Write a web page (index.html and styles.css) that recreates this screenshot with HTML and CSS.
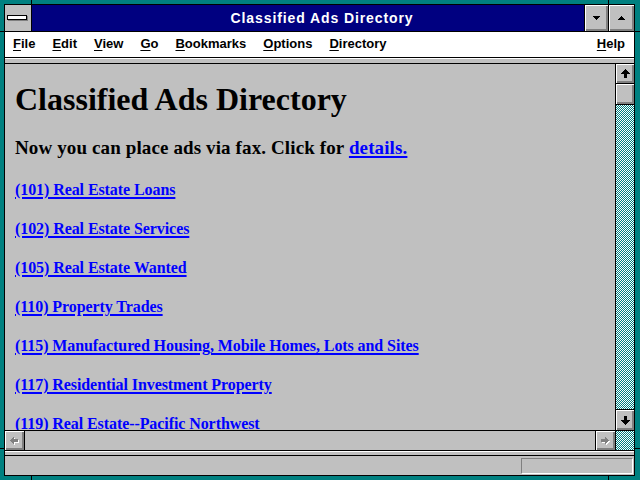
FILE: index.html
```html
<!DOCTYPE html>
<html lang="en">
  <head>
    <meta charset="UTF-8" />
    <title>Classified Ads Directory</title>
    <link rel="stylesheet" href="styles.css">
  </head>
  <body>
    <div class="window">
      <div class="titlebar">
        <div class="sysmenu"><div class="sysbar"></div></div>
        <div class="caption">Classified Ads Directory</div>
        <div class="tbtn min">
          <svg width="7" height="4" shape-rendering="crispEdges"><rect x="0" y="0" width="7" height="1"/><rect x="1" y="1" width="5" height="1"/><rect x="2" y="2" width="3" height="1"/><rect x="3" y="3" width="1" height="1"/></svg>
        </div>
        <div class="tbtn max">
          <svg width="7" height="4" shape-rendering="crispEdges"><rect x="3" y="0" width="1" height="1"/><rect x="2" y="1" width="3" height="1"/><rect x="1" y="2" width="5" height="1"/><rect x="0" y="3" width="7" height="1"/></svg>
        </div>
      </div>

      <div class="menubar">
        <span><u>F</u>ile</span>
        <span><u>E</u>dit</span>
        <span><u>V</u>iew</span>
        <span><u>G</u>o</span>
        <span><u>B</u>ookmarks</span>
        <span><u>O</u>ptions</span>
        <span><u>D</u>irectory</span>
        <span class="help"><u>H</u>elp</span>
      </div>
      <div class="divider"></div>

      <div class="main">
        <div class="page">
          <h1>Classified Ads Directory</h1>
          <h2>Now you can place ads via fax. Click for <a href="#">details.</a></h2>
          <p><a href="#">(101) Real Estate Loans</a></p>
          <p><a href="#">(102) Real Estate Services</a></p>
          <p><a href="#">(105) Real Estate Wanted</a></p>
          <p><a href="#">(110) Property Trades</a></p>
          <p><a href="#">(115) Manufactured Housing, Mobile Homes, Lots and Sites</a></p>
          <p><a href="#">(117) Residential Investment Property</a></p>
          <p><a href="#">(119) Real Estate--Pacific Northwest</a></p>
        </div>
        <div class="vscroll">
          <div class="sbtn">
            <svg width="9" height="9" shape-rendering="crispEdges"><rect x="4" y="0" width="1" height="1"/><rect x="3" y="1" width="3" height="1"/><rect x="2" y="2" width="5" height="1"/><rect x="1" y="3" width="7" height="1"/><rect x="0" y="4" width="9" height="1"/><rect x="3" y="5" width="3" height="4"/></svg>
          </div>
          <div class="thumb"></div>
          <div class="trough">
            <svg width="100%" height="100%" shape-rendering="crispEdges">
              <defs>
                <pattern id="dith" width="2" height="2" patternUnits="userSpaceOnUse">
                  <rect width="2" height="2" fill="#ffffff"/>
                  <rect x="0" y="0" width="1" height="1" fill="#008080"/>
                  <rect x="1" y="1" width="1" height="1" fill="#008080"/>
                </pattern>
              </defs>
              <rect width="100%" height="100%" fill="url(#dith)"/>
            </svg>
          </div>
          <div class="sbtn down">
            <svg width="9" height="9" shape-rendering="crispEdges"><rect x="3" y="0" width="3" height="4"/><rect x="0" y="4" width="9" height="1"/><rect x="1" y="5" width="7" height="1"/><rect x="2" y="6" width="5" height="1"/><rect x="3" y="7" width="3" height="1"/><rect x="4" y="8" width="1" height="1"/></svg>
          </div>
        </div>
      </div>

      <div class="hscroll">
        <div class="hbtn left">
          <svg width="9" height="8" shape-rendering="crispEdges">
            <g fill="#fff"><rect x="1" y="4" width="1" height="1"/><rect x="2" y="3" width="1" height="3"/><rect x="3" y="2" width="1" height="5"/><rect x="4" y="1" width="1" height="7"/><rect x="5" y="3" width="4" height="3"/></g>
            <g fill="#808080"><rect x="0" y="3" width="1" height="1"/><rect x="1" y="2" width="1" height="3"/><rect x="2" y="1" width="1" height="5"/><rect x="3" y="0" width="1" height="7"/><rect x="4" y="2" width="4" height="3"/></g>
          </svg>
        </div>
        <div class="htrough"></div>
        <div class="hbtn right">
          <svg width="9" height="8" shape-rendering="crispEdges">
            <g fill="#fff"><rect x="1" y="3" width="4" height="3"/><rect x="5" y="1" width="1" height="7"/><rect x="6" y="2" width="1" height="5"/><rect x="7" y="3" width="1" height="3"/><rect x="8" y="4" width="1" height="1"/></g>
            <g fill="#808080"><rect x="0" y="2" width="4" height="3"/><rect x="4" y="0" width="1" height="7"/><rect x="5" y="1" width="1" height="5"/><rect x="6" y="2" width="1" height="3"/><rect x="7" y="3" width="1" height="1"/></g>
          </svg>
        </div>
        <div class="corner">
          <svg width="100%" height="100%" shape-rendering="crispEdges"><rect width="100%" height="100%" fill="url(#dith)"/></svg>
        </div>
      </div>
      <div class="sep"></div>

      <div class="status">
        <div class="status-box"></div>
      </div>
    </div>
  </body>
</html>
```

FILE: styles.css
```css
* {
  margin: 0;
  padding: 0;
  box-sizing: border-box;
}

:root {
  --gray: #c0c0c0;
  --shadow: #808080;
  --navy: #000080;
  --teal: #008080;
}

body {
  width: 640px;
  height: 480px;
  padding: 4px 5px 4px 4px;
  font-family: "Liberation Sans", Arial, sans-serif;
  overflow: hidden;
  /* frame corner notches */
  background:
    linear-gradient(#000, #000) 31px 0 / 1px 4px no-repeat,
    linear-gradient(#000, #000) 608px 0 / 1px 4px no-repeat,
    linear-gradient(#000, #000) 31px 476px / 1px 4px no-repeat,
    linear-gradient(#000, #000) 608px 476px / 1px 4px no-repeat,
    linear-gradient(#000, #000) 0 31px / 4px 1px no-repeat,
    linear-gradient(#000, #000) 635px 31px / 5px 1px no-repeat,
    linear-gradient(#000, #000) 0 448px / 4px 1px no-repeat,
    linear-gradient(#000, #000) 635px 448px / 5px 1px no-repeat,
    var(--teal);
}

.window {
  width: 631px;
  height: 472px;
  border: 1px solid #000;
  background: var(--gray);
  display: flex;
  flex-direction: column;
}

/* title bar */
.titlebar {
  display: flex;
  height: 27px;
  border-bottom: 1px solid #000;
}

.sysmenu {
  width: 27px;
  border-right: 1px solid #000;
  background: var(--gray);
  padding: 10px 0 0 2px;
}

.sysbar {
  width: 20px;
  height: 5px;
  border: 1px solid #000;
  background: #fff;
  box-shadow: 1px 1px 0 var(--shadow);
}

.caption {
  flex: 1;
  background: var(--navy);
  color: #fff;
  font-weight: bold;
  font-size: 14px;
  letter-spacing: 0.9px;
  line-height: 26px;
  text-align: center;
  padding-left: 28px;
}

.tbtn {
  width: 24px;
  border-left: 1px solid #000;
  display: flex;
  align-items: center;
  justify-content: center;
  box-shadow: inset 1px 1px 0 #fff, inset -1px -1px 0 var(--shadow), inset -2px -2px 0 var(--shadow);
}

.tbtn.max {
  width: 26px;
}

.tbtn svg {
  margin-bottom: 1px;
}

/* menu */
.menubar {
  display: flex;
  gap: 17px;
  height: 26px;
  padding: 0 9px 0 8px;
  background: #fff;
  border-bottom: 1px solid #000;
  font-size: 13px;
  font-weight: bold;
  line-height: 24px;
}

.menubar u {
  text-decoration-thickness: 1px;
  text-underline-offset: 2px;
}

.menubar .help {
  margin-left: auto;
}

.divider {
  height: 6px;
  border-top: 1px solid #fff;
  border-bottom: 1px solid #000;
}

/* document area */
.main {
  display: flex;
  height: 366px;
}

.page {
  flex: 1;
  overflow: hidden;
  padding: 0 10px;
  font-family: "Liberation Serif", "Times New Roman", serif;
  font-weight: bold;
}

.page h1 {
  margin-top: 17px;
  font-size: 32px;
  line-height: 36px;
}

.page h2 {
  margin: 20px 0 21px;
  font-size: 19px;
  line-height: 22px;
  letter-spacing: 0.12px;
}

.page p {
  font-size: 16px;
  line-height: 20px;
  margin-bottom: 19px;
  white-space: nowrap;
  letter-spacing: -0.08px;
}

.page a {
  color: #0000ff;
  text-decoration-thickness: 2px;
  text-underline-offset: 2px;
}

.vscroll {
  width: 19px;
  border-left: 1px solid #000;
  display: flex;
  flex-direction: column;
}

.sbtn {
  height: 20px;
  border-bottom: 1px solid #000;
  display: flex;
  align-items: center;
  justify-content: center;
  box-shadow: inset 1px 1px 0 #fff, inset -1px -1px 0 var(--shadow), inset -2px -2px 0 var(--shadow);
}

.sbtn.down {
  border-bottom: 0;
  border-top: 1px solid #000;
  height: 21px;
}

.thumb {
  height: 21px;
  border-bottom: 1px solid #000;
  box-shadow: inset 1px 1px 0 #fff, inset -1px -1px 0 var(--shadow), inset -2px -2px 0 var(--shadow);
}

.trough {
  flex: 1;
  overflow: hidden;
}

.trough svg,
.corner svg {
  display: block;
}

.hscroll {
  display: flex;
  height: 21px;
  border-top: 1px solid #000;
  border-bottom: 1px solid #000;
}

.hbtn {
  width: 20px;
  display: flex;
  align-items: center;
  justify-content: center;
  box-shadow: inset 1px 1px 0 #fff, inset -1px -1px 0 var(--shadow), inset -2px -2px 0 var(--shadow);
}

.hbtn.left {
  border-right: 1px solid #000;
}

.hbtn.right {
  border-left: 1px solid #000;
}

.htrough {
  flex: 1;
}

.corner {
  width: 19px;
  border-left: 1px solid #000;
  overflow: hidden;
}

.sep {
  height: 5px;
  border-top: 1px solid #fff;
  border-bottom: 1px solid #000;
}

/* status bar */
.status {
  height: 19px;
  display: flex;
  justify-content: flex-end;
  padding: 2px 1px 1px 0;
}

.status-box {
  width: 112px;
  border: 1px solid;
  border-color: var(--shadow) #fff #fff var(--shadow);
}
```
